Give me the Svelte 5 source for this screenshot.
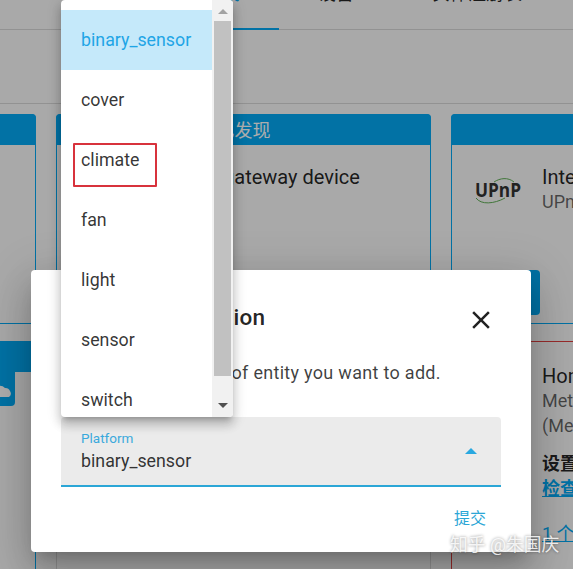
<script>
	const options = ['binary_sensor', 'cover', 'climate', 'fan', 'light', 'sensor', 'switch'];
	const selected = 'binary_sensor';
</script>

<div class="page">
	<nav class="tabs">
		<span class="tab active">集成</span>
		<span class="tab">设备</span>
		<span class="tab">实体注册表</span>
	</nav>
	<div class="toolbar"></div>

	<main class="grid">
		<section class="card"><div class="head">已配置</div></section>
		<section class="card">
			<div class="head">已发现</div>
			<div class="item">
				<div class="logo"></div>
				<div class="name">Yeelight gateway device</div>
			</div>
		</section>
		<section class="card">
			<div class="head">已发现</div>
			<div class="item">
				<svg class="logo" viewBox="0 0 54 34">
					<path d="M6 26 C11 33 24 32 35 26" fill="none" stroke="#5fae55" stroke-width="1" />
					<path d="M24 10 C30 6 38 5 44 10" fill="none" stroke="#5fae55" stroke-width="1" />
					<text x="5" y="25" class="upnp" textLength="46" lengthAdjust="spacingAndGlyphs">UPnP</text>
				</svg>
				<div>
					<div class="name">Internet Gateway Device</div>
					<div class="sub">UPnP</div>
				</div>
			</div>
			<div class="foot"><button class="config">配置</button></div>
		</section>

		<section class="card">
			<div class="head">云服务</div>
			<div class="cloud-wrap">
				<svg class="cloud" viewBox="0 0 60 34">
					<path d="M0 0H60V30a4 4 0 0 1-4 4H0Z" fill="#03a9f4" />
					<path d="M36 25a6 6 0 0 1 3-8 7 7 0 0 1 11-1 5 5 0 0 1 5 3 4.500 4.500 0 0 1-1 6Z" fill="#fff" />
				</svg>
			</div>
		</section>
		<section class="card plain"></section>
		<section class="card red">
			<div class="item top">
				<div class="logo"></div>
				<div>
					<div class="name">Home</div>
					<div class="sub">Meteorologisk institutt</div>
					<div class="sub">(Met.no)</div>
					<div class="label">设置</div>
					<a class="link strong" href="#options">检查选项</a>
					<a class="link count" href="#devices">1 个设备</a>
				</div>
			</div>
		</section>
	</main>

	<div class="scrim"></div>

	<div class="dialog">
		<div class="title-row">
			<h2>Entity Configuration</h2>
			<svg class="close" viewBox="0 0 24 24">
				<path d="M19 6.410 17.590 5 12 10.590 6.410 5 5 6.410 10.590 12 5 17.590 6.410 19 12 13.410 17.590 19 19 17.590 13.410 12z" />
			</svg>
		</div>
		<p>Please pick the type of entity you want to add.</p>
		<div class="select">
			<div>
				<div class="select-label">Platform</div>
				<div class="select-value">{selected}</div>
			</div>
			<span class="caret"></span>
		</div>
		<div class="actions"><span class="submit">提交</span></div>
	</div>

	<div class="menu">
		<ul>
			{#each options as option}
				<li class:selected={option === selected}>{option}</li>
			{/each}
		</ul>
		<div class="scrollbar">
			<span class="arrow up"></span>
			<div class="thumb"></div>
			<span class="arrow down"></span>
		</div>
	</div>

	<div class="mark"></div>
	<div class="watermark">知乎 @朱国庆</div>
</div>

<style>
	:global(body) {
		margin: 0;
	}
	.page {
		position: relative;
		width: 573px;
		height: 569px;
		overflow: hidden;
		background: #fafafa;
		color: rgba(0, 0, 0, 0.87);
		font-family: Roboto, 'Noto Sans CJK SC', sans-serif;
		font-size: 18px;
	}
	.tabs {
		display: flex;
		height: 49px;
		margin-top: -20px;
		padding-left: 165px;
		border-bottom: 1px solid #d8d8d8;
	}
	.tab {
		box-sizing: border-box;
		height: 49px;
		padding: 4px 39px 0;
		line-height: 20px;
		font-size: 18px;
	}
	.tab.active {
		color: #03a9f4;
		border-bottom: 2px solid #03a9f4;
		margin-bottom: -1px;
		height: 50px;
	}
	.toolbar {
		height: 73px;
		border-bottom: 1px solid #d8d8d8;
	}
	.grid {
		display: grid;
		grid-template-columns: repeat(3, 375px);
		grid-template-rows: 210px 300px;
		gap: 17px 20px;
		margin: 10px 0 0 -339px;
	}
	.card {
		box-sizing: border-box;
		border: 1px solid #03a9f4;
		border-radius: 4px;
		display: flex;
		flex-direction: column;
		min-height: 0;
	}
	.card.plain {
		border-color: #d8d8d8;
	}
	.card.red {
		border-color: #e04040;
		padding-top: 22px;
	}
	.head {
		height: 31px;
		margin: -1px -1px 0;
		border-radius: 4px 4px 0 0;
		background: #03a9f4;
		color: #fff;
		text-align: center;
		font-size: 18px;
		line-height: 33px;
		flex-shrink: 0;
	}
	.item {
		display: flex;
		align-items: flex-start;
		gap: 18px;
		padding: 20px 18px 0;
	}
	.item.top {
		padding-top: 0;
	}
	.logo {
		width: 54px;
		height: 34px;
		margin-top: 7px;
		flex-shrink: 0;
	}
	.upnp {
		font-family: 'Open Sans', sans-serif;
		font-size: 19px;
		font-weight: 700;
		fill: #333;
	}
	.name {
		font-size: 20px;
		line-height: 24px;
		white-space: nowrap;
	}
	.sub {
		font-size: 18px;
		line-height: 25px;
		color: rgba(0, 0, 0, 0.6);
		white-space: nowrap;
	}
	.label {
		margin-top: 13px;
		font-weight: 700;
		line-height: 25px;
	}
	.link {
		display: block;
		color: #03a9f4;
		text-decoration: underline;
		line-height: 25px;
		white-space: nowrap;
	}
	.link.strong {
		font-weight: 700;
	}
	.link.count {
		margin-top: 20px;
	}
	.foot {
		margin-top: auto;
		padding: 0 0 8px 0;
	}
	.config {
		display: block;
		width: 89px;
		height: 45px;
		border: 0;
		border-radius: 4px;
		background: #03a9f4;
		margin-left: -1px;
	}
	.cloud-wrap {
		display: flex;
		justify-content: flex-end;
		padding-right: 20px;
	}
	.cloud {
		display: block;
		width: 60px;
		height: 34px;
	}
	.scrim {
		position: absolute;
		inset: 0;
		background: rgba(0, 0, 0, 0.32);
	}
	.dialog {
		position: absolute;
		left: 31px;
		top: 270px;
		box-sizing: border-box;
		width: 500px;
		height: 282px;
		padding: 30px 30px 0;
		background: #fff;
		border-radius: 4px;
		box-shadow:
			0 11px 15px -7px rgba(0, 0, 0, 0.2),
			0 24px 38px 3px rgba(0, 0, 0, 0.14),
			0 9px 46px 8px rgba(0, 0, 0, 0.12);
	}
	.title-row {
		display: flex;
		align-items: center;
		justify-content: space-between;
		height: 36px;
	}
	h2 {
		margin: 0 0 2px;
		font-size: 22.500px;
		font-weight: 500;
		line-height: 34px;
		letter-spacing: 0.01em;
		white-space: nowrap;
	}
	.close {
		width: 30px;
		height: 30px;
		margin: 4px 5px 0 0;
		fill: #212121;
	}
	p {
		margin: 25px 0 0;
		font-size: 18px;
		line-height: 24px;
		letter-spacing: 0.3px;
		color: rgba(0, 0, 0, 0.75);
		white-space: nowrap;
	}
	.select {
		box-sizing: border-box;
		display: flex;
		align-items: center;
		justify-content: space-between;
		height: 70px;
		margin-top: 32px;
		padding: 0 24px 0 20px;
		background: #ebebeb;
		border-bottom: 2px solid #2ba6d6;
		border-radius: 4px 4px 0 0;
	}
	.select-label {
		font-size: 13.500px;
		line-height: 16px;
		color: #3aa9dc;
	}
	.select-value {
		margin-top: 4px;
		font-size: 17.800px;
		line-height: 22px;
		color: rgba(0, 0, 0, 0.8);
	}
	.caret {
		width: 0;
		height: 0;
		border: 6px solid transparent;
		border-top: 0;
		border-bottom: 6px solid #29a8e0;
	}
	.actions {
		display: flex;
		justify-content: flex-end;
		padding: 20px 15px 0 0;
	}
	.submit {
		font-size: 16px;
		line-height: 24px;
		color: #2ba6d6;
	}
	.menu {
		position: absolute;
		left: 61px;
		top: 0;
		display: flex;
		width: 172px;
		height: 417px;
		overflow: hidden;
		background: #fff;
		border-radius: 4px;
		box-shadow:
			0 5px 5px -3px rgba(0, 0, 0, 0.2),
			0 8px 10px 1px rgba(0, 0, 0, 0.14),
			0 3px 14px 2px rgba(0, 0, 0, 0.12);
	}
	ul {
		flex: 1;
		margin: 0;
		padding: 10px 0 0;
		list-style: none;
	}
	li {
		height: 60px;
		padding-left: 20px;
		font-size: 17.800px;
		line-height: 60px;
		color: rgba(0, 0, 0, 0.8);
	}
	li.selected {
		background: #c5e9fa;
		color: #1fa5e6;
	}
	.scrollbar {
		display: flex;
		flex-direction: column;
		align-items: center;
		width: 21px;
		background: #f1f1f1;
	}
	.thumb {
		width: 17px;
		height: 355px;
		margin-top: 7px;
		background: #c1c1c1;
	}
	.arrow {
		width: 0;
		height: 0;
		border: 5px solid transparent;
	}
	.arrow.up {
		margin-top: 9px;
		border-top: 0;
		border-bottom: 5px solid #a3a3a3;
	}
	.arrow.down {
		margin-top: 27px;
		border-bottom: 0;
		border-top: 5px solid #505050;
	}
	.mark {
		position: absolute;
		left: 73px;
		top: 143px;
		box-sizing: border-box;
		width: 84px;
		height: 44px;
		border: 2px solid #d8323c;
		border-radius: 1px;
	}
	.watermark {
		position: absolute;
		left: 450px;
		top: 533px;
		font-size: 17.800px;
		line-height: 24px;
		white-space: nowrap;
		color: rgba(255, 255, 255, 0.85);
		text-shadow: 0 0 3px rgba(0, 0, 0, 0.45);
	}
</style>
